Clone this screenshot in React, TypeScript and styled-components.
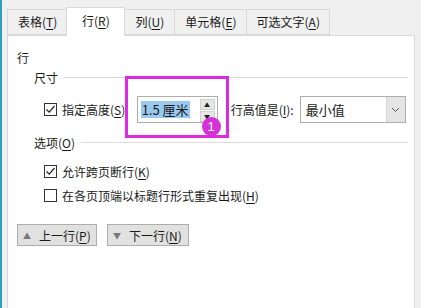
import React from 'react'
import styled, { createGlobalStyle } from 'styled-components'

const GlobalStyle = createGlobalStyle`
  html, body {
    margin: 0;
    padding: 0;
    background: #f0f0f0;
  }
  body {
    font-family: "Noto Sans CJK SC", "Noto Sans", "Liberation Sans", sans-serif;
    font-size: 12px;
    color: #1a1a1a;
  }
`

const Window = styled.div`
  display: flex;
  width: 421px;
  height: 308px;
  overflow: hidden;
  background: #f0f0f0;
`

const Edge = styled.div`
  width: 2px;
  flex: none;
  background: #2aa3b4;
`

const Main = styled.div`
  flex: 1;
  display: flex;
  flex-direction: column;
  padding: 7px 6px 0 5px;
`

const TabBar = styled.div`
  display: flex;
  align-items: flex-end;
  height: 28px;
  padding-left: 1px;
`

const Tab = styled.div<{ $active?: boolean }>`
  position: relative;
  display: flex;
  align-items: center;
  justify-content: center;
  box-sizing: border-box;
  min-width: ${(p) => (p.$active ? '59px' : '52px')};
  height: ${(p) => (p.$active ? '29px' : '26px')};
  margin: ${(p) => (p.$active ? '0 -1px -1px -1px' : '0 0 0 -1px')};
  padding: ${(p) => (p.$active ? '0 10px 3px' : '0 9px 1px 10px')};
  border: 1px solid #d9d9d9;
  border-bottom: ${(p) => (p.$active ? 'none' : '1px solid #d9d9d9')};
  background: ${(p) => (p.$active ? '#ffffff' : '#f0f0f0')};
  z-index: ${(p) => (p.$active ? 2 : 1)};
  white-space: nowrap;
`

const Key = styled.span`
  text-decoration: underline;
  text-underline-offset: 2px;
`

const Panel = styled.div`
  flex: 1;
  background: #ffffff;
  border: 1px solid #d9d9d9;
  border-bottom: none;
  padding: 14px 6px 0 9px;
`

const Title = styled.div`
  line-height: 16px;
  height: 16px;
`

const GroupHead = styled.div<{ $top: number }>`
  display: flex;
  align-items: center;
  gap: 6px;
  margin: ${(p) => p.$top}px 0 0 17px;
  height: 16px;
  &::after {
    content: '';
    flex: 1;
    height: 1px;
    background: #dcdcdc;
  }
`

const Row = styled.div<{ $top: number }>`
  display: flex;
  align-items: center;
  margin: ${(p) => p.$top}px 0 0 27px;
  height: 16px;
`

const SizeRow = styled.div`
  display: flex;
  align-items: center;
  margin: 11px 0 0 27px;
  height: 27px;
`

const Check = styled.span`
  position: relative;
  box-sizing: border-box;
  width: 13px;
  height: 13px;
  flex: none;
  border: 1px solid #333333;
  background: #fff;
  margin-right: 5px;
  svg {
    position: absolute;
    left: 0;
    top: 0;
  }
`

const InputWrap = styled.div`
  position: relative;
  margin-left: 8px;
`

const SpinInput = styled.div`
  display: flex;
  box-sizing: border-box;
  width: 81px;
  height: 27px;
  border: 1px solid #adadad;
  background: #fff;
  padding: 3px 2px 3px 3px;
`

const Value = styled.div`
  flex: 1;
  display: flex;
  align-items: center;
  font-size: 13px;
  span {
    background: #99c9ef;
    padding: 0 1px;
    line-height: 17px;
  }
`

const Spinner = styled.div`
  display: flex;
  flex-direction: column;
  gap: 1px;
  width: 15px;
  margin-top: -1px;
`

const SpinBtn = styled.div`
  flex: 1;
  display: flex;
  align-items: center;
  justify-content: center;
  background: #e6e6e6;
  border: 1px solid #cfcfcf;
  font-size: 6px;
  color: #222;
`

const Highlight = styled.div`
  position: absolute;
  left: -12px;
  top: -20px;
  width: 104px;
  height: 62px;
  box-sizing: border-box;
  border: 3px solid #e02ae0;
  pointer-events: none;
`

const Badge = styled.div`
  position: absolute;
  left: 65px;
  top: 21px;
  width: 19px;
  height: 19px;
  border-radius: 50%;
  background: #d431d8;
  color: #fff;
  font-family: "Liberation Sans", sans-serif;
  font-size: 13px;
  display: flex;
  align-items: center;
  justify-content: center;
`

const Label = styled.span<{ $gap?: number }>`
  margin-left: ${(p) => p.$gap || 0}px;
  white-space: nowrap;
`

const Select = styled.div`
  display: flex;
  box-sizing: border-box;
  width: 106px;
  height: 27px;
  margin-left: 6px;
  border: 1px solid #adadad;
  background: #fff;
`

const SelectText = styled.div`
  flex: 1;
  display: flex;
  align-items: center;
  padding-left: 5px;
  font-size: 13px;
`

const SelectArrow = styled.div`
  width: 18px;
  display: flex;
  align-items: center;
  justify-content: center;
  background: #e5e5e5;
  border-left: 1px solid #d6d6d6;
`

const ButtonRow = styled.div`
  display: flex;
  gap: 10px;
  margin: 21px 0 0 0;
`

const NavButton = styled.div<{ $w: number }>`
  display: flex;
  align-items: center;
  gap: 8px;
  box-sizing: border-box;
  width: ${(p) => p.$w}px;
  height: 22px;
  padding-left: 5px;
  background: #e1e1e1;
  border: 1px solid #adadad;
`

const Tri = styled.span`
  font-size: 8px;
  color: #777777;
`

const Tick = () => (
  <svg width="11" height="11" viewBox="0 0 11 11">
    <path d="M1.5 5.5 L4.2 8.2 L9.5 2" fill="none" stroke="#222" strokeWidth="1.2" />
  </svg>
)

const Chevron = () => (
  <svg width="9" height="6" viewBox="0 0 9 6">
    <path d="M1 1 L4.5 4.5 L8 1" fill="none" stroke="#555" strokeWidth="1" />
  </svg>
)

const App: React.FC = () => {
  return (
    <>
      <GlobalStyle />
      <Window>
        <Edge />
        <Main>
          <TabBar>
            <Tab>表格(<Key>T</Key>)</Tab>
            <Tab $active>行(<Key>R</Key>)</Tab>
            <Tab>列(<Key>U</Key>)</Tab>
            <Tab>单元格(<Key>E</Key>)</Tab>
            <Tab>可选文字(<Key>A</Key>)</Tab>
          </TabBar>
          <Panel>
            <Title>行</Title>
            <GroupHead $top={3}>尺寸</GroupHead>
            <SizeRow>
              <Check>
                <Tick />
              </Check>
              <Label>指定高度(<Key>S</Key>):</Label>
              <InputWrap>
                <SpinInput>
                  <Value>
                    <span>1.5 厘米</span>
                  </Value>
                  <Spinner>
                    <SpinBtn>▲</SpinBtn>
                    <SpinBtn>▼</SpinBtn>
                  </Spinner>
                </SpinInput>
                <Highlight />
                <Badge>1</Badge>
              </InputWrap>
              <Label $gap={13}>行高值是(<Key>I</Key>):</Label>
              <Select>
                <SelectText>最小值</SelectText>
                <SelectArrow>
                  <Chevron />
                </SelectArrow>
              </Select>
            </SizeRow>
            <GroupHead $top={11}>
              <span>
                选项(<Key>O</Key>)
              </span>
            </GroupHead>
            <Row $top={13}>
              <Check>
                <Tick />
              </Check>
              <Label>允许跨页断行(<Key>K</Key>)</Label>
            </Row>
            <Row $top={8}>
              <Check />
              <Label>在各页顶端以标题行形式重复出现(<Key>H</Key>)</Label>
            </Row>
            <ButtonRow>
              <NavButton $w={80}>
                <Tri>▲</Tri>
                <span>上一行(<Key>P</Key>)</span>
              </NavButton>
              <NavButton $w={82}>
                <Tri>▼</Tri>
                <span>下一行(<Key>N</Key>)</span>
              </NavButton>
            </ButtonRow>
          </Panel>
        </Main>
      </Window>
    </>
  )
}

export default App
